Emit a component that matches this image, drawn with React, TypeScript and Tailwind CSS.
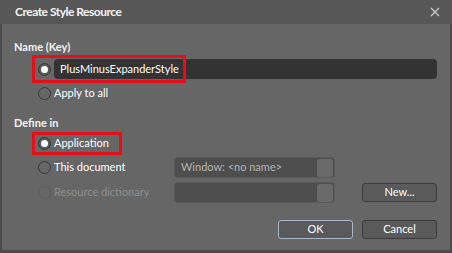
import React from "react";

const font = { fontFamily: 'Lato, "Noto Sans", "Liberation Sans", sans-serif' };

function Radio({ checked, disabled }: { checked?: boolean; disabled?: boolean }) {
  return (
    <span
      className={`flex h-[13px] w-[13px] shrink-0 items-center justify-center rounded-full border ${
        disabled ? "border-[#5c5c5c]" : "border-[#363636]"
      } ${checked ? "bg-[#5a5a5a]" : "bg-transparent"}`}
    >
      {checked && <span className="h-[7px] w-[7px] rounded-full bg-white" />}
    </span>
  );
}

function Combo({ label }: { label?: string }) {
  return (
    <div className="flex h-[21px] w-[161px] items-center justify-between rounded-[3px] border border-[#5a5a5a] bg-[#4e4e4e] pl-[6px] pr-[1px]">
      <span className="whitespace-nowrap text-[11px] text-[#b4b4b4]">{label}</span>
      <span className="h-[18px] w-[16px] rounded-[3px] bg-[#6a6a6a]" />
    </div>
  );
}

function Button({ label, focused }: { label: string; focused?: boolean }) {
  return (
    <button
      className={`flex h-[19px] w-[75px] items-center justify-center rounded-[3px] border bg-[#5a5a5a] text-[11px] text-white ${
        focused ? "border-[#a8b8c8]" : "border-[#3c3c3c]"
      }`}
    >
      {label}
    </button>
  );
}

export default function App() {
  return (
    <div className="h-[253px] w-[452px] bg-[#4b4b4b] text-white" style={font}>
      <div className="flex h-[24px] items-center justify-between bg-[#575757] pl-[15px] pr-[12px]">
        <span className="text-[12px] font-bold tracking-[-0.5px] text-[#f4f4f4]">Create Style Resource</span>
        <svg width="10" height="10" viewBox="0 0 10 10" className="text-[#c8c8c8]">
          <path d="M1 1 L9 9 M9 1 L1 9" stroke="currentColor" strokeWidth="1.4" />
        </svg>
      </div>
      <div className="mx-[2px] flex h-[226px] flex-col bg-[#666666] pl-[12px] pr-[13px]">
        <div className="mt-[15px] flex h-[16px] items-center text-[11px] font-bold text-[#f4f4f4]">Name (Key)</div>
        <div className="relative ml-[24px] mt-[4px] flex h-[20px] items-center">
          <Radio checked />
          <div className="ml-[3px] flex h-[20px] flex-1 items-center rounded-[4px] bg-[#333333] pl-[6px] text-[11px] text-white">
            PlusMinusExpanderStyle
          </div>
          <div className="pointer-events-none absolute -left-[6px] -top-[4px] h-[28px] w-[154px] border-[3px] border-[#e3101c]" />
        </div>
        <div className="ml-[24px] mt-[6px] flex h-[16px] items-center gap-[3px]">
          <Radio />
          <span className="text-[11px] text-white">Apply to all</span>
        </div>
        <div className="mt-[14px] flex h-[16px] items-center text-[11px] font-bold text-[#f4f4f4]">Define in</div>
        <div className="relative ml-[24px] mt-[4px] flex h-[16px] items-center gap-[3px]">
          <Radio checked />
          <span className="text-[11px] text-white">Application</span>
          <div className="pointer-events-none absolute -left-[6px] -top-[3px] h-[23px] w-[90px] border-[3px] border-[#e3101c]" />
        </div>
        <div className="ml-[24px] mt-[6px] flex h-[21px] items-center">
          <div className="flex w-[136px] items-center gap-[3px]">
            <Radio />
            <span className="whitespace-nowrap text-[11px] text-white">This document</span>
          </div>
          <Combo label="Window: <no name>" />
        </div>
        <div className="ml-[24px] mt-[4px] flex h-[21px] items-center">
          <div className="flex w-[136px] items-center gap-[3px]">
            <Radio disabled />
            <span className="whitespace-nowrap text-[11px] text-[#8e8e8e]">Resource dictionary</span>
          </div>
          <Combo />
          <div className="ml-auto">
            <Button label="New..." />
          </div>
        </div>
        <div className="mt-[17px] flex justify-end gap-[9px]">
          <Button label="OK" focused />
          <Button label="Cancel" />
        </div>
      </div>
    </div>
  );
}
